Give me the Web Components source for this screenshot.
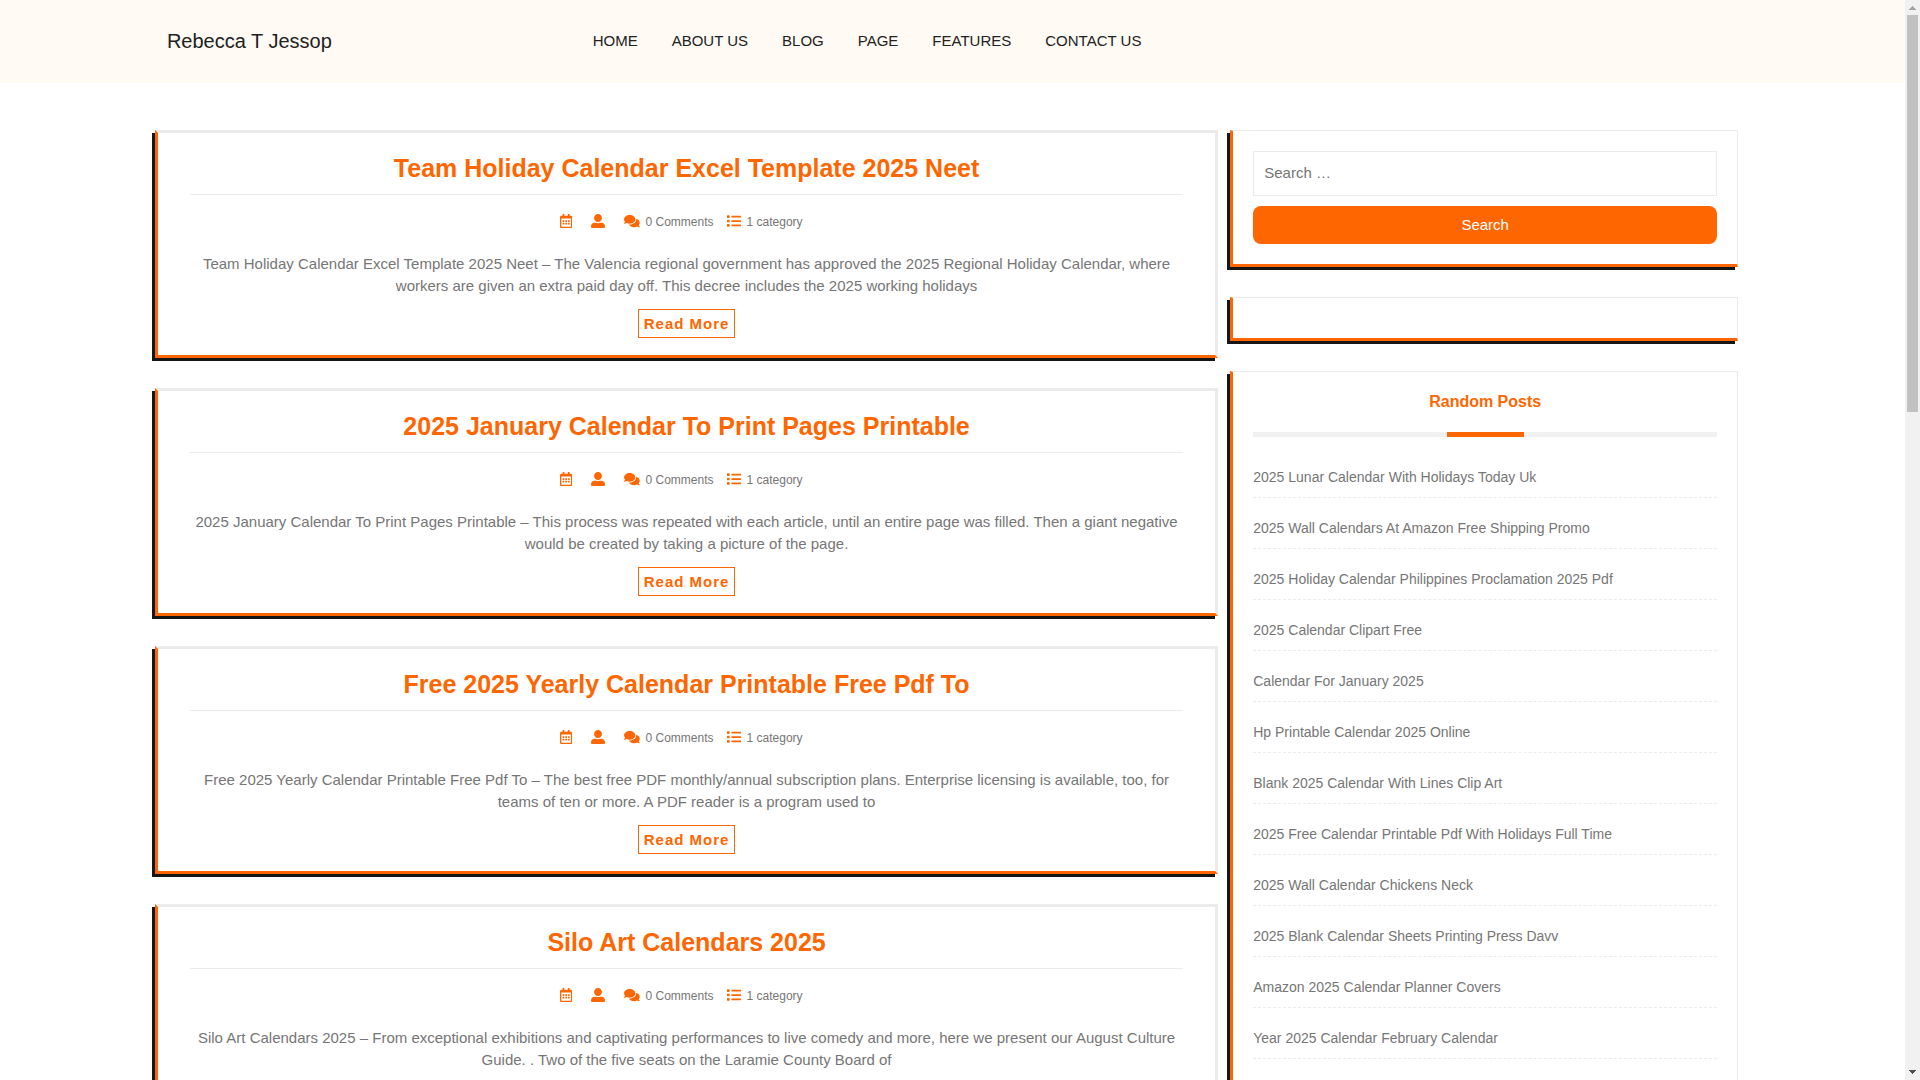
<!DOCTYPE html>
<html lang="en">
<head>
<meta charset="utf-8">
<title>Rebecca T Jessop</title>
<style>
	html, body {
		margin: 0;
		height: 100%;
	}
	body {
		--accent: #fe6601;
		--ink: #151515;
		--line: #ebebeb;
		--muted: #767676;
		background: #fff;
		color: var(--muted);
		font: 15px/22px "Liberation Sans", Arial, sans-serif;
	}
</style>
</head>
<body>

<page-shell>
	<site-header>
		<a slot="brand" href="#">Rebecca T Jessop</a>
		<a href="#">HOME</a>
		<a href="#">ABOUT US</a>
		<a href="#">BLOG</a>
		<a href="#">PAGE</a>
		<a href="#">FEATURES</a>
		<a href="#">CONTACT US</a>
	</site-header>
	<content-columns>
		<post-card heading="Team Holiday Calendar Excel Template 2025 Neet">Team Holiday Calendar Excel Template 2025 Neet – The Valencia regional government has approved the 2025 Regional Holiday Calendar, where workers are given an extra paid day off. This decree includes the 2025 working holidays</post-card>
		<post-card heading="2025 January Calendar To Print Pages Printable">2025 January Calendar To Print Pages Printable – This process was repeated with each article, until an entire page was filled. Then a giant negative would be created by taking a picture of the page.</post-card>
		<post-card heading="Free 2025 Yearly Calendar Printable Free Pdf To">Free 2025 Yearly Calendar Printable Free Pdf To – The best free PDF monthly/annual subscription plans. Enterprise licensing is available, too, for teams of ten or more. A PDF reader is a program used to</post-card>
		<post-card heading="Silo Art Calendars 2025">Silo Art Calendars 2025 – From exceptional exhibitions and captivating performances to live comedy and more, here we present our August Culture Guide. . Two of the five seats on the Laramie County Board of</post-card>

		<side-widget slot="side"><search-form></search-form></side-widget>
		<side-widget slot="side"></side-widget>
		<side-widget slot="side" heading="Random Posts" grow>
			<link-list>
				<a href="#">2025 Lunar Calendar With Holidays Today Uk</a>
				<a href="#">2025 Wall Calendars At Amazon Free Shipping Promo</a>
				<a href="#">2025 Holiday Calendar Philippines Proclamation 2025 Pdf</a>
				<a href="#">2025 Calendar Clipart Free</a>
				<a href="#">Calendar For January 2025</a>
				<a href="#">Hp Printable Calendar 2025 Online</a>
				<a href="#">Blank 2025 Calendar With Lines Clip Art</a>
				<a href="#">2025 Free Calendar Printable Pdf With Holidays Full Time</a>
				<a href="#">2025 Wall Calendar Chickens Neck</a>
				<a href="#">2025 Blank Calendar Sheets Printing Press Davv</a>
				<a href="#">Amazon 2025 Calendar Planner Covers</a>
				<a href="#">Year 2025 Calendar February Calendar</a>
			</link-list>
		</side-widget>
	</content-columns>
</page-shell>

<script>
// attaches an open shadow root filled with the given markup
class BaseElement extends HTMLElement {
	constructor() {
		super();
		const template = document.createElement("template");
		template.innerHTML = this.constructor.markup;
		this
			.attachShadow({mode: "open"})
			.appendChild(template.content.cloneNode(true));
	}

	find(selector) {
		return this.shadowRoot.querySelector(selector);
	}
}

class PageShell extends BaseElement {
	static markup = `
<style>
	:host {
		display: flex;
		height: 100vh;
	}
	.view {
		flex: 1;
		min-width: 0;
		overflow-y: auto;
		scrollbar-width: none;
	}
</style>
<div class="view"><slot></slot></div>
<scroll-track></scroll-track>`;
}

class ScrollTrack extends BaseElement {
	static markup = `
<style>
	:host {
		display: flex;
		flex-direction: column;
		flex-shrink: 0;
		width: 15px;
		background: #f1f1f1;
	}
	svg {
		display: block;
		width: 15px;
		height: 15px;
	}
	.thumb {
		flex: 378;
		margin: 0 2px;
		background: #c1c1c1;
	}
	.rest {
		flex: 622;
	}
</style>
<svg viewBox="0 0 15 15"><path fill="#a3a3a3" d="M7 6h1v1h1v1h1v1h1v1H4V9h1V8h1V7h1z"/></svg>
<div class="thumb"></div>
<div class="rest"></div>
<svg viewBox="0 0 15 15"><path fill="#505050" d="M4 5h7v1h-1v1H9v1H8v1H7V8H6V7H5V6H4z"/></svg>`;
}

class SiteHeader extends BaseElement {
	static markup = `
<style>
	:host {
		display: block;
		background: #fffaf4;
	}
	.bar {
		display: grid;
		grid-template-columns: 1fr 3fr;
		align-items: start;
		box-sizing: border-box;
		width: 85%;
		margin: 0 auto;
		padding: 30px 24px;
		line-height: 23px;
	}
	nav {
		display: flex;
		gap: 34px;
		padding-left: 33px;
		line-height: 21px;
	}
	::slotted(a) {
		color: #222;
		text-decoration: none;
	}
	::slotted([slot=brand]) {
		font-size: 20px;
	}
</style>
<header class="bar">
	<slot name="brand"></slot>
	<nav><slot></slot></nav>
</header>`;
}

class ContentColumns extends BaseElement {
	static markup = `
<style>
	:host {
		display: grid;
		grid-template-columns: minmax(0, 67fr) minmax(0, 32fr);
		gap: 12px;
		box-sizing: border-box;
		width: 85%;
		margin: 0 auto;
		padding: 47px 24px 47px 12px;
	}
	main, aside {
		display: flex;
		flex-direction: column;
		gap: 30px;
	}
</style>
<main><slot></slot></main>
<aside><slot name="side"></slot></aside>`;
}

class PostCard extends BaseElement {
	static markup = `
<style>
	:host {
		display: block;
		padding: 20px 32px 17px;
		border: 3px solid var(--line);
		border-left-color: var(--accent);
		border-bottom-color: var(--accent);
		box-shadow: -3px 3px 0 var(--ink);
		text-align: center;
	}
	h2 {
		margin: 0;
		padding-bottom: 11px;
		border-bottom: 1px solid var(--line);
		font-size: 25px;
		line-height: 30px;
	}
	a {
		color: var(--accent);
		text-decoration: none;
	}
	.meta {
		display: flex;
		justify-content: center;
		gap: 13px;
		margin: 18px 0 22px;
		padding-right: 11px;
		font-size: 12px;
		line-height: 18px;
	}
	.meta span {
		display: flex;
		gap: 6px;
	}
	svg {
		height: 14px;
		margin-top: 1px;
		fill: var(--accent);
	}
	p {
		margin: 0 0 12px;
	}
	.more {
		display: inline-block;
		vertical-align: top;
		padding: 3px 5px 2px;
		border: 1px solid;
		font-weight: bold;
		letter-spacing: 1px;
	}
</style>
<article>
	<h2><a href="#"></a></h2>
	<div class="meta">
		<span><svg viewBox="0 0 448 512"><path d="M148 288h-40c-6.600 0-12-5.400-12-12v-40c0-6.600 5.400-12 12-12h40c6.600 0 12 5.400 12 12v40c0 6.600-5.400 12-12 12zm108-12v-40c0-6.600-5.400-12-12-12h-40c-6.600 0-12 5.400-12 12v40c0 6.600 5.400 12 12 12h40c6.600 0 12-5.400 12-12zm96 0v-40c0-6.600-5.400-12-12-12h-40c-6.600 0-12 5.400-12 12v40c0 6.600 5.400 12 12 12h40c6.600 0 12-5.400 12-12zm-96 96v-40c0-6.600-5.400-12-12-12h-40c-6.600 0-12 5.400-12 12v40c0 6.600 5.400 12 12 12h40c6.600 0 12-5.400 12-12zm-96 0v-40c0-6.600-5.400-12-12-12h-40c-6.600 0-12 5.400-12 12v40c0 6.600 5.400 12 12 12h40c6.600 0 12-5.400 12-12zm192 0v-40c0-6.600-5.400-12-12-12h-40c-6.600 0-12 5.400-12 12v40c0 6.600 5.400 12 12 12h40c6.600 0 12-5.400 12-12zm96-260v352c0 26.500-21.500 48-48 48H48c-26.500 0-48-21.500-48-48V112c0-26.500 21.500-48 48-48h48V12c0-6.600 5.400-12 12-12h40c6.600 0 12 5.400 12 12v52h128V12c0-6.600 5.400-12 12-12h40c6.600 0 12 5.400 12 12v52h48c26.500 0 48 21.500 48 48zm-48 346V160H48v298c0 3.300 2.700 6 6 6h340c3.300 0 6-2.700 6-6z"/></svg><i></i></span>
		<span><svg viewBox="0 0 512 512"><path d="M256 288c79.500 0 144-64.500 144-144S335.500 0 256 0 112 64.500 112 144s64.500 144 144 144zm128 32h-55.100c-22.200 10.200-46.900 16-72.900 16s-50.600-5.800-72.900-16H128C57.300 320 0 377.300 0 448v16c0 26.500 21.500 48 48 48h416c26.500 0 48-21.500 48-48v-16c0-70.700-57.300-128-128-128z"/></svg><i></i></span>
		<span><svg viewBox="0 0 576 512"><path d="M416 192c0-88.400-93.100-160-208-160S0 103.600 0 192c0 34.300 14.100 65.900 38 92-13.400 30.200-35.500 54.200-35.800 54.500-2.200 2.300-2.800 5.700-1.500 8.700S4.800 352 8 352c36.600 0 66.900-12.300 88.700-25 32.200 15.700 70.300 25 111.300 25 114.900 0 208-71.600 208-160zm122 220c23.900-26 38-57.700 38-92 0-66.900-53.500-124.200-129.300-148.100.9 6.600 1.300 13.300 1.300 20.100 0 105.900-107.700 192-240 192-10.800 0-21.300-.8-31.700-1.900C207.800 439.600 281.800 480 368 480c41 0 79.100-9.200 111.300-25 21.800 12.700 52.100 25 88.700 25 3.200 0 6.100-1.900 7.300-4.800 1.300-2.900.7-6.300-1.500-8.700-.3-.3-22.400-24.200-35.800-54.500z"/></svg>0 Comments</span>
		<span><svg viewBox="0 0 512 512"><path d="M80 368H16a16 16 0 0 0-16 16v64a16 16 0 0 0 16 16h64a16 16 0 0 0 16-16v-64a16 16 0 0 0-16-16zm0-320H16A16 16 0 0 0 0 64v64a16 16 0 0 0 16 16h64a16 16 0 0 0 16-16V64a16 16 0 0 0-16-16zm0 160H16a16 16 0 0 0-16 16v64a16 16 0 0 0 16 16h64a16 16 0 0 0 16-16v-64a16 16 0 0 0-16-16zm416 176H176a16 16 0 0 0-16 16v32a16 16 0 0 0 16 16h320a16 16 0 0 0 16-16v-32a16 16 0 0 0-16-16zm0-320H176a16 16 0 0 0-16 16v32a16 16 0 0 0 16 16h320a16 16 0 0 0 16-16V80a16 16 0 0 0-16-16zm0 160H176a16 16 0 0 0-16 16v32a16 16 0 0 0 16 16h320a16 16 0 0 0 16-16v-32a16 16 0 0 0-16-16z"/></svg>1 category</span>
	</div>
	<p><slot></slot></p>
	<a class="more" href="#">Read More</a>
</article>`;

	connectedCallback() {
		this.find("h2 a").textContent = this.getAttribute("heading");
	}
}

class SideWidget extends BaseElement {
	static markup = `
<style>
	:host {
		display: block;
		padding: 20px;
		border: 1px solid var(--line);
		border-left: 3px solid var(--accent);
		border-bottom: 3px solid var(--accent);
		box-shadow: -3px 3px 0 var(--ink);
	}
	:host([grow]) {
		flex-grow: 1;
	}
	h3 {
		margin: 0 0 10px;
		color: var(--accent);
		font-size: 16px;
		line-height: 20px;
		text-align: center;
	}
	/* grey rule with the accent piece in its middle sixth */
	h3::after {
		content: "";
		display: block;
		height: 5px;
		margin-top: 20px;
		background: linear-gradient(var(--accent), var(--accent)) center / calc(100% / 6) 100% no-repeat #f1f1f1;
	}
	h3[hidden] {
		display: none;
	}
</style>
<h3 hidden></h3>
<slot></slot>`;

	connectedCallback() {
		const heading = this.find("h3");
		heading.textContent = this.getAttribute("heading") || "";
		heading.hidden = !this.hasAttribute("heading");
	}
}

class SearchForm extends BaseElement {
	static markup = `
<style>
	:host {
		display: block;
	}
	form {
		display: grid;
		gap: 10px;
	}
	input, button {
		box-sizing: border-box;
		width: 100%;
		margin: 0;
		font: inherit;
	}
	input {
		height: 45px;
		padding: 0 10px 2px;
		border: 1px solid var(--line);
		background: #fff;
		color: var(--muted);
	}
	input::placeholder {
		color: #757575;
	}
	button {
		height: 38px;
		border: 0;
		border-radius: 8px;
		background: var(--accent);
		color: #fff;
	}
</style>
<form role="search">
	<input type="search" aria-label="Search" placeholder="Search …">
	<button type="button">Search</button>
</form>`;
}

class LinkList extends BaseElement {
	static markup = `
<style>
	:host {
		display: block;
		font-size: 14px;
		line-height: 21px;
	}
	::slotted(a) {
		display: block;
		padding: 20px 0 9px;
		border-bottom: 1px dashed var(--line);
		color: var(--muted);
		text-decoration: none;
	}
</style>
<slot></slot>`;
}

customElements.define("page-shell", PageShell);
customElements.define("scroll-track", ScrollTrack);
customElements.define("site-header", SiteHeader);
customElements.define("content-columns", ContentColumns);
customElements.define("post-card", PostCard);
customElements.define("side-widget", SideWidget);
customElements.define("search-form", SearchForm);
customElements.define("link-list", LinkList);
</script>
</body>
</html>
